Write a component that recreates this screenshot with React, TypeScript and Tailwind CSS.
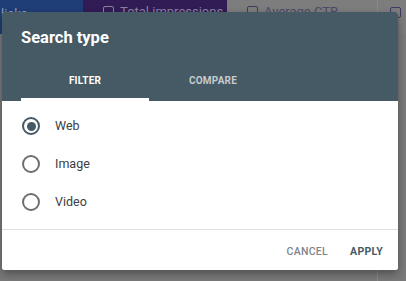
import React from "react";

function Radio({ checked, label }: { checked?: boolean; label: string }) {
  return (
    <div className="flex items-center h-[38px] pl-[20px]">
      <div
        className={
          "w-[18px] h-[18px] rounded-full border-2 flex items-center justify-center " +
          (checked ? "border-[#455a64]" : "border-[#6f6f6f]")
        }
      >
        {checked && <div className="w-[9px] h-[9px] rounded-full bg-[#455a64]" />}
      </div>
      <span className="ml-[15px] text-[12.5px] text-[#3c4043]">{label}</span>
    </div>
  );
}

export default function App() {
  return (
    <div
      className="relative w-[406px] h-[281px] overflow-hidden bg-[#7a7a7a]"
      style={{ fontFamily: "Roboto, 'Liberation Sans', sans-serif" }}
    >
      {/* dimmed page behind */}
      <div className="flex h-[34px]">
        <div className="w-[83px] bg-[#1f3e77] text-[#8d9bb5] text-[13px] pt-[4px] pl-[1px]">licks</div>
        <div className="w-[144px] bg-[#311c56] flex items-start pt-[6px] pl-[20px] gap-[6px]">
          <div className="w-[11px] h-[11px] border border-[#8a82a0] rounded-[2px]" />
          <span className="text-[#8a82a0] text-[13px] leading-[12px]">Total impressions</span>
        </div>
        <div className="flex-1 bg-[#7d7d7d] flex items-start pt-[6px] pl-[20px] gap-[6px]">
          <div className="w-[11px] h-[11px] border border-[#3e3a66] rounded-[2px]" />
          <span className="text-[#4c4a68] text-[13px] leading-[12px]">Average CTR</span>
        </div>
      </div>
      <div className="absolute left-[390px] top-[7px] w-[11px] h-[11px] border border-[#3e3a66] rounded-[2px]" />
      <div className="absolute left-[377px] top-[0px] w-px h-[281px] bg-[#8a8a8a]" />

      {/* dialog */}
      <div className="absolute left-[2px] top-[12px] w-[396px] h-[258px] bg-white rounded-[2px] shadow-[0_4px_10px_rgba(0,0,0,0.35)] flex flex-col overflow-hidden">
        <div className="bg-[#455a64] h-[89px] shrink-0 flex flex-col">
          <div className="pl-[19px] pt-[15px] text-white text-[16.5px] font-bold leading-[22px]">Search type</div>
          <div className="flex mt-[25px] pl-[19px]">
            <div className="w-[128px] flex flex-col items-center">
              <span className="text-white text-[10px] font-bold tracking-[0.2px] leading-[14px]">FILTER</span>
              <div className="mt-[10px] w-full h-[3px] bg-white" />
            </div>
            <div className="w-[128px] flex flex-col items-center">
              <span className="text-[#c5cbce] text-[10px] font-bold tracking-[0.2px] leading-[14px]">COMPARE</span>
            </div>
          </div>
        </div>
        <div className="pt-[6px] flex flex-col">
          <Radio checked label="Web" />
          <Radio label="Image" />
          <Radio label="Video" />
        </div>
        <div className="mt-[8px] h-px bg-[#e0e0e0]" />
        <div className="flex justify-end items-center h-[40px] pt-[3px] pr-[15px] gap-[22px]">
          <span className="text-[#80868b] text-[10.5px] font-medium tracking-[0.3px]">CANCEL</span>
          <span className="text-[#455a64] text-[10.5px] font-bold tracking-[0.3px]">APPLY</span>
        </div>
      </div>
    </div>
  );
}
